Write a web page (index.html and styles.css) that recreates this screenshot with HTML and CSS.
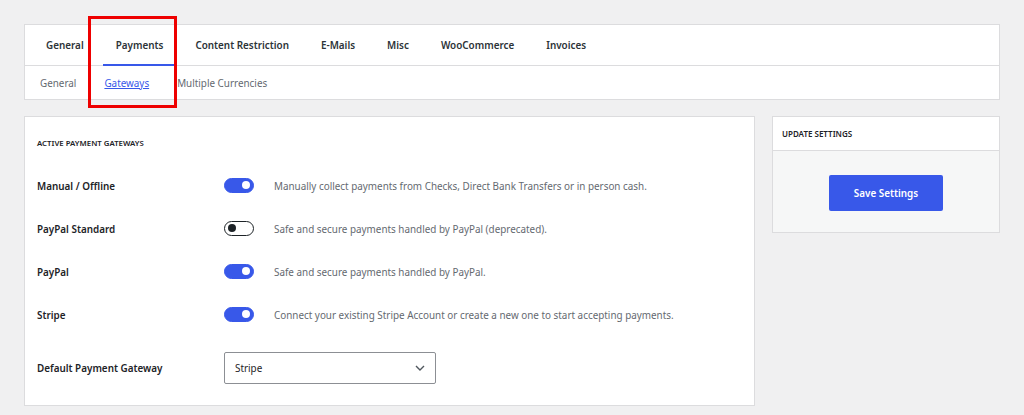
FILE: index.html
```html
<!DOCTYPE html>
<html lang="en">

<head>
    <meta charset="UTF-8">
    <meta name="viewport" content="width=device-width, initial-scale=1.0">
    <title>Settings - Payments</title>
    <link rel="stylesheet" href="styles.css">
</head>

<body>
    <div class="nav-card">
        <div class="tabs">
            <a class="tab">General</a>
            <a class="tab active">Payments</a>
            <a class="tab">Content Restriction</a>
            <a class="tab">E-Mails</a>
            <a class="tab">Misc</a>
            <a class="tab">WooCommerce</a>
            <a class="tab">Invoices</a>
        </div>
        <div class="subtabs">
            <a class="subtab">General</a>
            <a class="subtab current">Gateways</a>
            <a class="subtab">Multiple Currencies</a>
        </div>
        <div class="highlight"></div>
    </div>

    <div class="columns">
        <div class="main-card">
            <h3 class="section-title">Active Payment Gateways</h3>

            <div class="row">
                <div class="label">Manual / Offline</div>
                <span class="toggle on"></span>
                <div class="desc">Manually collect payments from Checks, Direct Bank Transfers or in person cash.</div>
            </div>
            <div class="row">
                <div class="label">PayPal Standard</div>
                <span class="toggle"></span>
                <div class="desc">Safe and secure payments handled by PayPal (deprecated).</div>
            </div>
            <div class="row">
                <div class="label">PayPal</div>
                <span class="toggle on"></span>
                <div class="desc">Safe and secure payments handled by PayPal.</div>
            </div>
            <div class="row">
                <div class="label">Stripe</div>
                <span class="toggle on"></span>
                <div class="desc">Connect your existing Stripe Account or create a new one to start accepting payments.</div>
            </div>
            <div class="row select-row">
                <div class="label">Default Payment Gateway</div>
                <div class="select">
                    <span>Stripe</span>
                    <svg width="10" height="6" viewBox="0 0 10 6"><path d="M1 1l4 4 4-4" fill="none" stroke="#50575e" stroke-width="1.4"/></svg>
                </div>
            </div>
        </div>

        <div class="side-card">
            <div class="side-head">Update Settings</div>
            <div class="side-body">
                <button class="save">Save Settings</button>
            </div>
        </div>
    </div>
</body>

</html>
```

FILE: styles.css
```css
body {
    margin: 0;
    padding: 24px;
    background: #f0f0f1;
    font-family: "Noto Sans", "Open Sans", sans-serif;
    color: #1d2327;
}

.nav-card {
    position: relative;
    width: 974px;
    background: #fff;
    border: 1px solid #dcdcde;
}

.tabs {
    display: flex;
    height: 40px;
    padding-left: 8px;
    border-bottom: 1px solid #dcdcde;
}

.tab {
    display: flex;
    align-items: center;
    padding: 0 13px;
    margin-right: 6px;
    font-size: 9.9px;
    font-weight: 600;
    color: #2c3338;
    border-bottom: 2px solid transparent;
    margin-bottom: -1px;
}

.tab.active {
    border-bottom-color: #3858e9;
}

.subtabs {
    display: flex;
    align-items: center;
    gap: 28px;
    height: 33px;
    padding-left: 15px;
}

.subtab {
    font-size: 9.9px;
    color: #646970;
}

.subtab.current {
    color: #3858e9;
    text-decoration: underline;
}

.highlight {
    position: absolute;
    left: 63px;
    top: -9px;
    width: 83px;
    height: 86px;
    border: 3px solid #ee0000;
}

.columns {
    display: flex;
    align-items: flex-start;
    gap: 17px;
    margin-top: 16px;
}

.main-card {
    width: 705px;
    padding: 21px 12px 16px 12px;
    background: #fff;
    border: 1px solid #dcdcde;
}

.section-title {
    margin: 0 0 16px;
    font-size: 7.8px;
    font-weight: 600;
    text-transform: uppercase;
    color: #1d2327;
}

.row {
    display: flex;
    align-items: center;
    height: 43px;
}

.label {
    width: 187px;
    font-size: 9.9px;
    font-weight: 600;
}

.toggle {
    position: relative;
    box-sizing: border-box;
    width: 30px;
    height: 15px;
    border-radius: 8px;
    border: 1.5px solid #1d2327;
    background: #fff;
    margin-right: 20px;
}

.toggle::after {
    content: "";
    position: absolute;
    top: 2px;
    left: 3px;
    width: 8px;
    height: 8px;
    border-radius: 50%;
    background: #1d2327;
}

.toggle.on {
    background: #3858e9;
    border-color: #3858e9;
}

.toggle.on::after {
    left: auto;
    right: 3px;
    background: #fff;
}

.desc {
    font-size: 9.9px;
    color: #646970;
}

.select-row {
    height: 42px;
    margin-top: 11px;
}

.select {
    display: flex;
    align-items: center;
    justify-content: space-between;
    box-sizing: border-box;
    width: 212px;
    height: 32px;
    padding: 0 10px;
    border: 1px solid #8c8f94;
    border-radius: 2px;
    font-size: 9.9px;
}

.side-card {
    width: 226px;
    background: #fff;
    border: 1px solid #dcdcde;
}

.side-head {
    height: 33px;
    line-height: 33px;
    padding-left: 9px;
    font-size: 8px;
    font-weight: 600;
    text-transform: uppercase;
    border-bottom: 1px solid #dcdcde;
}

.side-body {
    display: flex;
    justify-content: center;
    padding: 24px 0 21px;
    background: #f6f7f7;
}

.save {
    width: 114px;
    height: 36px;
    border: none;
    border-radius: 2px;
    background: #3858e9;
    color: #fff;
    font-family: inherit;
    font-size: 9.9px;
    font-weight: 600;
}
```
